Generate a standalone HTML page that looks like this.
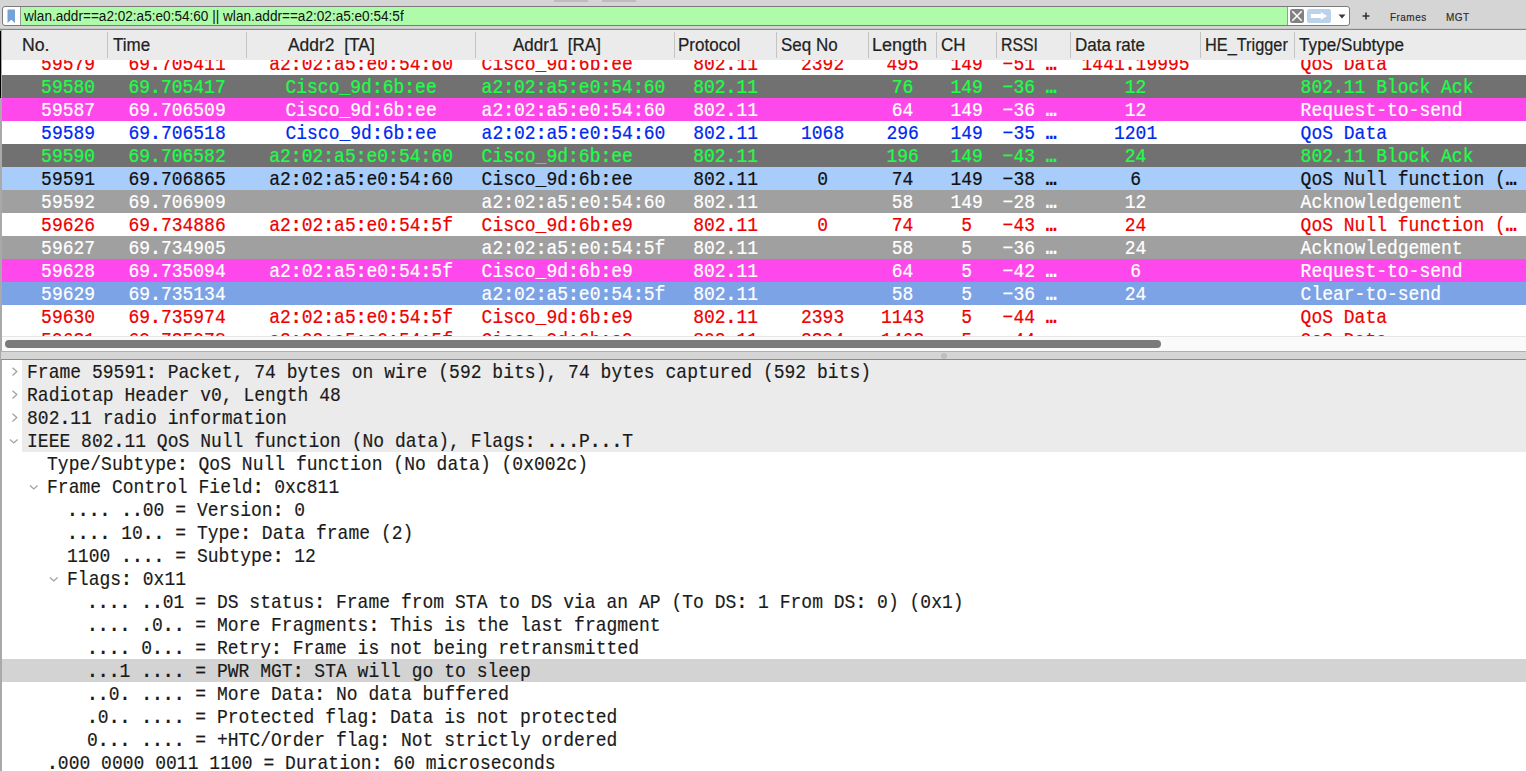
<!DOCTYPE html>
<html><head><meta charset="utf-8">
<style>
html,body{margin:0;padding:0;}
body{width:1526px;height:771px;overflow:hidden;position:relative;background:#d5d5d5;font-family:"Liberation Sans",sans-serif;}
.abs{position:absolute;}
#topr1,#topr2{position:absolute;top:0;height:2px;background:#bdbdbd;}
#filter{position:absolute;left:2px;top:6px;width:1346px;height:18px;border:1px solid #7b7b7b;border-radius:3px;background:#fff;overflow:hidden;}
#green{position:absolute;left:17px;top:0;width:1266px;height:18px;background:#aefcaa;border-left:1px solid #9a9a9a;border-right:1px solid #9a9a9a;}
#ftext{position:absolute;left:3px;top:1px;font-size:13.6px;line-height:17px;color:#111;white-space:pre;transform:scaleY(1.1);transform-origin:0 14px;}
#tbline{position:absolute;left:0;top:28px;width:1526px;height:1px;background:#c8c8c8;border-bottom:1px solid #858585;}
#hdr{position:absolute;left:0;top:30px;width:1526px;height:30px;background:#ebebeb;}
.ht{position:absolute;top:1px;font-size:17px;line-height:29px;color:#222;white-space:pre;transform:scaleY(1.1);transform-origin:0 20px;-webkit-text-stroke:0.2px #222;}
.sep{position:absolute;top:2px;width:1px;height:26px;background:#c4c4c4;}
#plist{position:absolute;left:2px;top:60px;width:1524px;height:276px;background:#fff;overflow:hidden;}
.row{position:absolute;left:-2px;width:1526px;height:23px;font-family:"Liberation Mono",monospace;font-size:18px;-webkit-text-stroke:0.2px currentColor;}
.row span{position:absolute;line-height:23px;white-space:pre;top:2px;margin-left:0.6px;transform:scaleY(1.08);transform-origin:0 17px;}
.row .c{text-align:center;}
.row b{font-weight:bold;}
.wr{background:#fff;color:#ee0000;}
.wb{background:#fff;color:#0028ee;}
.dg{background:#717171;color:#1cff48;}
.mg{background:#ff48ec;color:#fff;}
.sel{background:#a8cdfa;color:#111;}
.gr{background:#a0a0a0;color:#fff;}
.mb{background:#7ba3e6;color:#fff;}
#strack{position:absolute;left:2px;top:336px;width:1524px;height:15px;background:#fafafa;border-top:1px solid #e6e6e6;box-sizing:border-box;}
#thumb{position:absolute;left:5px;top:340px;width:1156px;height:8px;border-radius:4px;background:#7a7a7a;}
#spl1{position:absolute;left:0;top:351px;width:1526px;height:1px;background:#b0b0b0;}
#spl{position:absolute;left:0;top:352px;width:1526px;height:7px;background:#d5d5d5;}
#spl2{position:absolute;left:0;top:359px;width:1526px;height:1px;background:#8a8a8a;}
#dot{position:absolute;left:941px;top:353px;width:6px;height:6px;border-radius:3px;background:#bfbfbf;}
#tree{position:absolute;left:2px;top:360px;width:1524px;height:411px;background:#fff;}
.tbg{position:absolute;width:1526px;height:23px;background:#ebebeb;}
.hlbg{background:#d3d3d3;}
.tt{position:absolute;font-family:"Liberation Mono",monospace;font-size:18px;line-height:23px;color:#1a1a1a;white-space:pre;margin-top:2px;letter-spacing:0.02px;-webkit-text-stroke:0.15px currentColor;transform:scaleY(1.08);transform-origin:0 17px;}
.arr{position:absolute;}
.tt b{font-weight:bold;}
#lborder{position:absolute;left:0;top:30px;width:2px;height:741px;background:#a9a9a9;}
</style></head><body>
<div id="topr1" style="left:554px;width:34px"></div>
<div id="topr2" style="left:602px;width:34px"></div>
<div id="filter">
  <svg style="position:absolute;left:4px;top:2px" width="9" height="15" viewBox="0 0 9 15"><path d="M0.5 0.5 H8 V14 L4.25 10.8 L0.5 14 Z" fill="#76a2d6"/></svg>
  <div id="green"><span id="ftext">wlan.addr==a2:02:a5:e0:54:60 || wlan.addr==a2:02:a5:e0:54:5f</span></div>
  <svg style="position:absolute;left:1287px;top:2px" width="14" height="14" viewBox="0 0 14 14"><rect x="0" y="0" width="14" height="14" rx="2.2" fill="#828380"/><path d="M2.3 2.3 L11.7 11.7 M11.7 2.3 L2.3 11.7" stroke="#fff" stroke-width="1.5"/></svg>
  <svg style="position:absolute;left:1304px;top:2px" width="24" height="14" viewBox="0 0 24 14"><rect x="0" y="0" width="24" height="14" rx="2.5" fill="#bcd2ec"/><path d="M3.8 5 H13.8 V3 L20 7 L13.8 11 V9 H3.8 Z" fill="#fff"/></svg>
  <svg style="position:absolute;left:1335px;top:7px" width="8" height="5" viewBox="0 0 8 5"><path d="M0.5 0.5 H7.5 L4 4.5 Z" fill="#3a3a3a"/></svg>
</div>
<svg style="position:absolute;left:1361px;top:11px" width="10" height="10" viewBox="0 0 10 10"><path d="M5 1.5 V8.5 M1.5 5 H8.5" stroke="#333" stroke-width="1.6"/></svg>
<span class="abs" style="left:1390px;top:11px;font-size:10px;letter-spacing:0.45px;line-height:14px;color:#2a2a2a;-webkit-text-stroke:0.15px #2a2a2a">Frames</span>
<span class="abs" style="left:1446px;top:11px;font-size:10px;letter-spacing:0.45px;line-height:14px;color:#2a2a2a;-webkit-text-stroke:0.15px #2a2a2a">MGT</span>
<div id="tbline"></div>
<div id="hdr"><span class="ht" style="left:22px;transform:scale(1.04,1.1)">No.</span><span class="ht" style="left:113px;transform:scale(1,1.1)">Time</span><span class="ht" style="left:288px;transform:scale(1.025,1.1)">Addr2&nbsp; [TA]</span><span class="ht" style="left:513px;transform:scale(1,1.1)">Addr1&nbsp; [RA]</span><span class="ht" style="left:678px;transform:scale(1.0,1.1)">Protocol</span><span class="ht" style="left:781px;transform:scale(1,1.1)">Seq No</span><span class="ht" style="left:872px;transform:scale(1.06,1.1)">Length</span><span class="ht" style="left:941px;transform:scale(1,1.1)">CH</span><span class="ht" style="left:1001px;transform:scale(0.93,1.1)">RSSI</span><span class="ht" style="left:1075px;transform:scale(1,1.1)">Data rate</span><span class="ht" style="left:1205px;transform:scale(0.96,1.1)">HE_Trigger</span><span class="ht" style="left:1299px;transform:scale(1.01,1.1)">Type/Subtype</span><i class="sep" style="left:107px"></i><i class="sep" style="left:246px"></i><i class="sep" style="left:475px"></i><i class="sep" style="left:674px"></i><i class="sep" style="left:776px"></i><i class="sep" style="left:868px"></i><i class="sep" style="left:936px"></i><i class="sep" style="left:996px"></i><i class="sep" style="left:1070px"></i><i class="sep" style="left:1200px"></i><i class="sep" style="left:1294px"></i></div>
<div id="plist">
<div class="row wr" style="top:-8px"><span class="c" style="left:28px;width:79px">59579</span><span class="c" style="left:107px;width:139px">69<b>.</b>705411</span><span class="c" style="left:246px;width:229px">a2<b>:</b>02<b>:</b>a5<b>:</b>e0<b>:</b>54<b>:</b>60</span><span class="l" style="left:481px">Cisco_9d<b>:</b>6b<b>:</b>ee</span><span class="c" style="left:674px;width:102px">802<b>.</b>11</span><span class="c" style="left:776px;width:92px">2392</span><span class="c" style="left:868px;width:68px">495</span><span class="c" style="left:936px;width:60px">149</span><span class="l" style="left:1002px">−51 <b>…</b></span><span class="c" style="left:1070px;width:130px">1441<b>.</b>19995</span><span class="l" style="left:1300px">QoS Data</span></div>
<div class="row dg" style="top:15px"><span class="c" style="left:28px;width:79px">59580</span><span class="c" style="left:107px;width:139px">69<b>.</b>705417</span><span class="c" style="left:246px;width:229px">Cisco_9d<b>:</b>6b<b>:</b>ee</span><span class="l" style="left:481px">a2<b>:</b>02<b>:</b>a5<b>:</b>e0<b>:</b>54<b>:</b>60</span><span class="c" style="left:674px;width:102px">802<b>.</b>11</span><span class="c" style="left:868px;width:68px">76</span><span class="c" style="left:936px;width:60px">149</span><span class="l" style="left:1002px">−36 <b>…</b></span><span class="c" style="left:1070px;width:130px">12</span><span class="l" style="left:1300px">802<b>.</b>11 Block Ack</span></div>
<div class="row mg" style="top:38px"><span class="c" style="left:28px;width:79px">59587</span><span class="c" style="left:107px;width:139px">69<b>.</b>706509</span><span class="c" style="left:246px;width:229px">Cisco_9d<b>:</b>6b<b>:</b>ee</span><span class="l" style="left:481px">a2<b>:</b>02<b>:</b>a5<b>:</b>e0<b>:</b>54<b>:</b>60</span><span class="c" style="left:674px;width:102px">802<b>.</b>11</span><span class="c" style="left:868px;width:68px">64</span><span class="c" style="left:936px;width:60px">149</span><span class="l" style="left:1002px">−36 <b>…</b></span><span class="c" style="left:1070px;width:130px">12</span><span class="l" style="left:1300px">Request-to-send</span></div>
<div class="row wb" style="top:61px"><span class="c" style="left:28px;width:79px">59589</span><span class="c" style="left:107px;width:139px">69<b>.</b>706518</span><span class="c" style="left:246px;width:229px">Cisco_9d<b>:</b>6b<b>:</b>ee</span><span class="l" style="left:481px">a2<b>:</b>02<b>:</b>a5<b>:</b>e0<b>:</b>54<b>:</b>60</span><span class="c" style="left:674px;width:102px">802<b>.</b>11</span><span class="c" style="left:776px;width:92px">1068</span><span class="c" style="left:868px;width:68px">296</span><span class="c" style="left:936px;width:60px">149</span><span class="l" style="left:1002px">−35 <b>…</b></span><span class="c" style="left:1070px;width:130px">1201</span><span class="l" style="left:1300px">QoS Data</span></div>
<div class="row dg" style="top:84px"><span class="c" style="left:28px;width:79px">59590</span><span class="c" style="left:107px;width:139px">69<b>.</b>706582</span><span class="c" style="left:246px;width:229px">a2<b>:</b>02<b>:</b>a5<b>:</b>e0<b>:</b>54<b>:</b>60</span><span class="l" style="left:481px">Cisco_9d<b>:</b>6b<b>:</b>ee</span><span class="c" style="left:674px;width:102px">802<b>.</b>11</span><span class="c" style="left:868px;width:68px">196</span><span class="c" style="left:936px;width:60px">149</span><span class="l" style="left:1002px">−43 <b>…</b></span><span class="c" style="left:1070px;width:130px">24</span><span class="l" style="left:1300px">802<b>.</b>11 Block Ack</span></div>
<div class="row sel" style="top:107px"><span class="c" style="left:28px;width:79px">59591</span><span class="c" style="left:107px;width:139px">69<b>.</b>706865</span><span class="c" style="left:246px;width:229px">a2<b>:</b>02<b>:</b>a5<b>:</b>e0<b>:</b>54<b>:</b>60</span><span class="l" style="left:481px">Cisco_9d<b>:</b>6b<b>:</b>ee</span><span class="c" style="left:674px;width:102px">802<b>.</b>11</span><span class="c" style="left:776px;width:92px">0</span><span class="c" style="left:868px;width:68px">74</span><span class="c" style="left:936px;width:60px">149</span><span class="l" style="left:1002px">−38 <b>…</b></span><span class="c" style="left:1070px;width:130px">6</span><span class="l" style="left:1300px">QoS Null function (<b>…</b></span></div>
<div class="row gr" style="top:130px"><span class="c" style="left:28px;width:79px">59592</span><span class="c" style="left:107px;width:139px">69<b>.</b>706909</span><span class="l" style="left:481px">a2<b>:</b>02<b>:</b>a5<b>:</b>e0<b>:</b>54<b>:</b>60</span><span class="c" style="left:674px;width:102px">802<b>.</b>11</span><span class="c" style="left:868px;width:68px">58</span><span class="c" style="left:936px;width:60px">149</span><span class="l" style="left:1002px">−28 <b>…</b></span><span class="c" style="left:1070px;width:130px">12</span><span class="l" style="left:1300px">Acknowledgement</span></div>
<div class="row wr" style="top:153px"><span class="c" style="left:28px;width:79px">59626</span><span class="c" style="left:107px;width:139px">69<b>.</b>734886</span><span class="c" style="left:246px;width:229px">a2<b>:</b>02<b>:</b>a5<b>:</b>e0<b>:</b>54<b>:</b>5f</span><span class="l" style="left:481px">Cisco_9d<b>:</b>6b<b>:</b>e9</span><span class="c" style="left:674px;width:102px">802<b>.</b>11</span><span class="c" style="left:776px;width:92px">0</span><span class="c" style="left:868px;width:68px">74</span><span class="c" style="left:936px;width:60px">5</span><span class="l" style="left:1002px">−43 <b>…</b></span><span class="c" style="left:1070px;width:130px">24</span><span class="l" style="left:1300px">QoS Null function (<b>…</b></span></div>
<div class="row gr" style="top:176px"><span class="c" style="left:28px;width:79px">59627</span><span class="c" style="left:107px;width:139px">69<b>.</b>734905</span><span class="l" style="left:481px">a2<b>:</b>02<b>:</b>a5<b>:</b>e0<b>:</b>54<b>:</b>5f</span><span class="c" style="left:674px;width:102px">802<b>.</b>11</span><span class="c" style="left:868px;width:68px">58</span><span class="c" style="left:936px;width:60px">5</span><span class="l" style="left:1002px">−36 <b>…</b></span><span class="c" style="left:1070px;width:130px">24</span><span class="l" style="left:1300px">Acknowledgement</span></div>
<div class="row mg" style="top:199px"><span class="c" style="left:28px;width:79px">59628</span><span class="c" style="left:107px;width:139px">69<b>.</b>735094</span><span class="c" style="left:246px;width:229px">a2<b>:</b>02<b>:</b>a5<b>:</b>e0<b>:</b>54<b>:</b>5f</span><span class="l" style="left:481px">Cisco_9d<b>:</b>6b<b>:</b>e9</span><span class="c" style="left:674px;width:102px">802<b>.</b>11</span><span class="c" style="left:868px;width:68px">64</span><span class="c" style="left:936px;width:60px">5</span><span class="l" style="left:1002px">−42 <b>…</b></span><span class="c" style="left:1070px;width:130px">6</span><span class="l" style="left:1300px">Request-to-send</span></div>
<div class="row mb" style="top:222px"><span class="c" style="left:28px;width:79px">59629</span><span class="c" style="left:107px;width:139px">69<b>.</b>735134</span><span class="l" style="left:481px">a2<b>:</b>02<b>:</b>a5<b>:</b>e0<b>:</b>54<b>:</b>5f</span><span class="c" style="left:674px;width:102px">802<b>.</b>11</span><span class="c" style="left:868px;width:68px">58</span><span class="c" style="left:936px;width:60px">5</span><span class="l" style="left:1002px">−36 <b>…</b></span><span class="c" style="left:1070px;width:130px">24</span><span class="l" style="left:1300px">Clear-to-send</span></div>
<div class="row wr" style="top:245px"><span class="c" style="left:28px;width:79px">59630</span><span class="c" style="left:107px;width:139px">69<b>.</b>735974</span><span class="c" style="left:246px;width:229px">a2<b>:</b>02<b>:</b>a5<b>:</b>e0<b>:</b>54<b>:</b>5f</span><span class="l" style="left:481px">Cisco_9d<b>:</b>6b<b>:</b>e9</span><span class="c" style="left:674px;width:102px">802<b>.</b>11</span><span class="c" style="left:776px;width:92px">2393</span><span class="c" style="left:868px;width:68px">1143</span><span class="c" style="left:936px;width:60px">5</span><span class="l" style="left:1002px">−44 <b>…</b></span><span class="l" style="left:1300px">QoS Data</span></div>
<div class="row wr" style="top:268px"><span class="c" style="left:28px;width:79px">59631</span><span class="c" style="left:107px;width:139px">69<b>.</b>735978</span><span class="c" style="left:246px;width:229px">a2<b>:</b>02<b>:</b>a5<b>:</b>e0<b>:</b>54<b>:</b>5f</span><span class="l" style="left:481px">Cisco_9d<b>:</b>6b<b>:</b>e9</span><span class="c" style="left:674px;width:102px">802<b>.</b>11</span><span class="c" style="left:776px;width:92px">2394</span><span class="c" style="left:868px;width:68px">1463</span><span class="c" style="left:936px;width:60px">5</span><span class="l" style="left:1002px">−44 <b>…</b></span><span class="l" style="left:1300px">QoS Data</span></div>
</div>
<div id="strack"></div>
<div id="thumb"></div>
<div id="spl1"></div><div id="spl"></div><div id="spl2"></div><div id="dot"></div>
<div id="tree">
<div style="position:absolute;left:-2px;top:-360px;width:1526px;height:771px">
<div class="tbg" style="top:360px;left:22px"></div><svg class="arr" style="left:11px;top:367px" width="8" height="10" viewBox="0 0 8 10"><path d="M1.5 0.8 L5.8 4.6 L1.5 8.4" fill="none" stroke="#a2a2a2" stroke-width="1.3"/></svg><span class="tt" style="left:27px;top:360px">Frame 59591<b>:</b> Packet, 74 bytes on wire (592 bits), 74 bytes captured (592 bits)</span>
<div class="tbg" style="top:383px;left:22px"></div><svg class="arr" style="left:11px;top:390px" width="8" height="10" viewBox="0 0 8 10"><path d="M1.5 0.8 L5.8 4.6 L1.5 8.4" fill="none" stroke="#a2a2a2" stroke-width="1.3"/></svg><span class="tt" style="left:27px;top:383px">Radiotap Header v0, Length 48</span>
<div class="tbg" style="top:406px;left:22px"></div><svg class="arr" style="left:11px;top:413px" width="8" height="10" viewBox="0 0 8 10"><path d="M1.5 0.8 L5.8 4.6 L1.5 8.4" fill="none" stroke="#a2a2a2" stroke-width="1.3"/></svg><span class="tt" style="left:27px;top:406px">802<b>.</b>11 radio information</span>
<div class="tbg" style="top:429px;left:22px"></div><svg class="arr" style="left:8px;top:438px" width="11" height="8" viewBox="0 0 11 8"><path d="M2 1.6 L5.8 5 L9.6 1.6" fill="none" stroke="#a2a2a2" stroke-width="1.3"/></svg><span class="tt" style="left:27px;top:429px">IEEE 802<b>.</b>11 QoS Null function (No data), Flags<b>:</b> <b>.</b><b>.</b><b>.</b>P<b>.</b><b>.</b><b>.</b>T</span>
<span class="tt" style="left:47px;top:452px">Type/Subtype<b>:</b> QoS Null function (No data) (0x002c)</span>
<svg class="arr" style="left:28px;top:484px" width="11" height="8" viewBox="0 0 11 8"><path d="M2 1.6 L5.8 5 L9.6 1.6" fill="none" stroke="#a2a2a2" stroke-width="1.3"/></svg><span class="tt" style="left:47px;top:475px">Frame Control Field<b>:</b> 0xc811</span>
<span class="tt" style="left:67px;top:498px"><b>.</b><b>.</b><b>.</b><b>.</b> <b>.</b><b>.</b>00 = Version<b>:</b> 0</span>
<span class="tt" style="left:67px;top:521px"><b>.</b><b>.</b><b>.</b><b>.</b> 10<b>.</b><b>.</b> = Type<b>:</b> Data frame (2)</span>
<span class="tt" style="left:67px;top:544px">1100 <b>.</b><b>.</b><b>.</b><b>.</b> = Subtype<b>:</b> 12</span>
<svg class="arr" style="left:48px;top:576px" width="11" height="8" viewBox="0 0 11 8"><path d="M2 1.6 L5.8 5 L9.6 1.6" fill="none" stroke="#a2a2a2" stroke-width="1.3"/></svg><span class="tt" style="left:67px;top:567px">Flags<b>:</b> 0x11</span>
<span class="tt" style="left:87px;top:590px"><b>.</b><b>.</b><b>.</b><b>.</b> <b>.</b><b>.</b>01 = DS status<b>:</b> Frame from STA to DS via an AP (To DS<b>:</b> 1 From DS<b>:</b> 0) (0x1)</span>
<span class="tt" style="left:87px;top:613px"><b>.</b><b>.</b><b>.</b><b>.</b> <b>.</b>0<b>.</b><b>.</b> = More Fragments<b>:</b> This is the last fragment</span>
<span class="tt" style="left:87px;top:636px"><b>.</b><b>.</b><b>.</b><b>.</b> 0<b>.</b><b>.</b><b>.</b> = Retry<b>:</b> Frame is not being retransmitted</span>
<div class="tbg hlbg" style="top:659px;left:2px"></div><span class="tt" style="left:87px;top:659px"><b>.</b><b>.</b><b>.</b>1 <b>.</b><b>.</b><b>.</b><b>.</b> = PWR MGT<b>:</b> STA will go to sleep</span>
<span class="tt" style="left:87px;top:682px"><b>.</b><b>.</b>0<b>.</b> <b>.</b><b>.</b><b>.</b><b>.</b> = More Data<b>:</b> No data buffered</span>
<span class="tt" style="left:87px;top:705px"><b>.</b>0<b>.</b><b>.</b> <b>.</b><b>.</b><b>.</b><b>.</b> = Protected flag<b>:</b> Data is not protected</span>
<span class="tt" style="left:87px;top:728px">0<b>.</b><b>.</b><b>.</b> <b>.</b><b>.</b><b>.</b><b>.</b> = +HTC/Order flag<b>:</b> Not strictly ordered</span>
<span class="tt" style="left:47px;top:751px"><b>.</b>000 0000 0011 1100 = Duration<b>:</b> 60 microseconds</span>
</div>
</div>
<div id="lborder"></div><div style="position:absolute;left:1px;top:351px;width:1px;height:1px;background:#b0b0b0"></div><div style="position:absolute;left:1px;top:352px;width:1px;height:7px;background:#d5d5d5"></div><div style="position:absolute;left:1px;top:359px;width:1px;height:1px;background:#8a8a8a"></div><div style="position:absolute;left:0;top:31px;width:1px;height:67px;background:#000"></div>
</body></html>
